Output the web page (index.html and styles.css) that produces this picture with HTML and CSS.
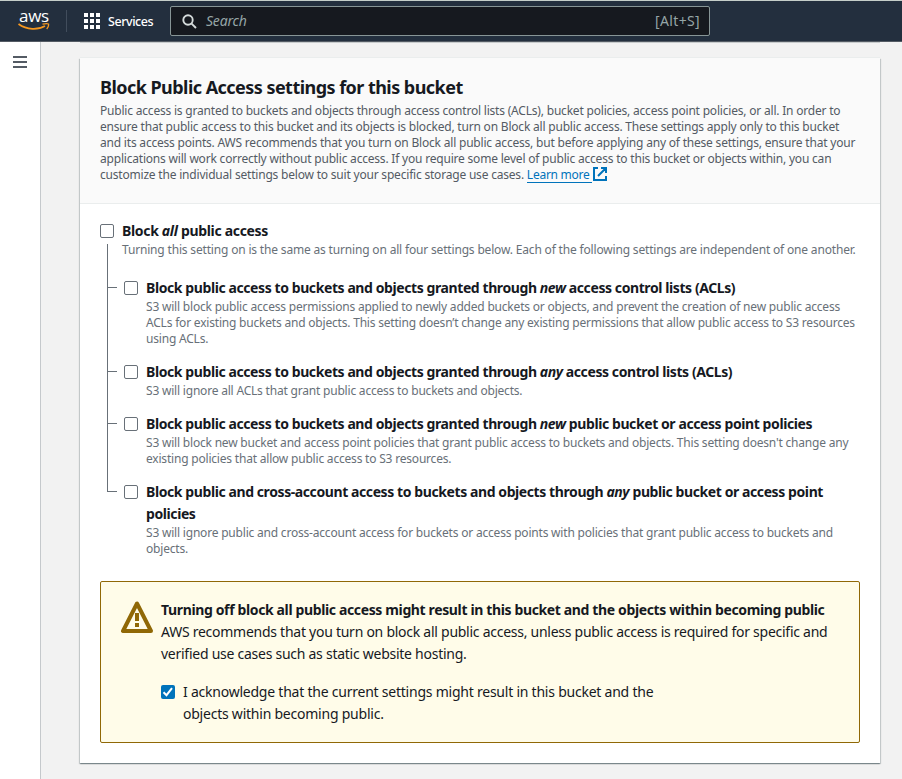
FILE: index.html
```html
<!DOCTYPE html>
<html lang="en">
<head>
<meta charset="utf-8">
<title>Block Public Access settings</title>
<link rel="stylesheet" href="styles.css">
</head>
<body>
<header class="topbar">
  <div class="logo"><span>aws</span>
    <svg width="32" height="8" viewBox="0 0 32 8"><path d="M.5 1C9 7.200 20 7.200 27 3" fill="none" stroke="#f7981f" stroke-width="1.700"/><path d="M24.500 1.200Q29 .2 30.500 1 31 3.500 28.700 6" fill="none" stroke="#f7981f" stroke-width="1.300"/></svg>
  </div>
  <div class="services">
    <svg width="16" height="16" viewBox="0 0 16 16" fill="#fff"><path d="M0 0h4v4H0zM6 0h4v4H6zM12 0h4v4h-4zM0 6h4v4H0zM6 6h4v4H6zM12 6h4v4h-4zM0 12h4v4H0zM6 12h4v4H6zM12 12h4v4h-4z"/></svg>
    <span>Services</span>
  </div>
  <div class="search">
    <svg width="15" height="15" viewBox="0 0 15 15" fill="none" stroke="#d5dbdb" stroke-width="1.900"><circle cx="6" cy="6" r="4.700"/><path d="M9.300 9.300 14 14"/></svg>
    <span class="hint">Search</span><span class="key">[Alt+S]</span>
  </div>
</header>
<div class="page">
  <nav class="side"><svg width="14" height="12" viewBox="0 0 14 12" fill="#545b64"><path d="M0 0h14v2H0zM0 5h14v2H0zM0 10h14v2H0z"/></svg></nav>
  <main>
    <div class="previous"></div>
    <section class="card">
      <div class="head">
        <h1>Block Public Access settings for this bucket</h1>
        <p class="small intro">
          <span>Public access is granted to buckets and objects through access control lists (ACLs), bucket policies, access point policies, or all. In order to</span>
          <span>ensure that public access to this bucket and its objects is blocked, turn on Block all public access. These settings apply only to this bucket</span>
          <span>and its access points. AWS recommends that you turn on Block all public access, but before applying any of these settings, ensure that your</span>
          <span>applications will work correctly without public access. If you require some level of public access to this bucket or objects within, you can</span>
          <span>customize the individual settings below to suit your specific storage use cases. <a>Learn more&nbsp;</a><svg class="ext" width="14" height="14" viewBox="0 0 14 14" fill="none" stroke="#0073bb" stroke-width="2"><path d="M5 1H1v12h12V9M8 1h5v5M13 1 5 9"/></svg></span>
        </p>
      </div>
      <div class="body">
        <div class="option">
          <i class="box"></i>
          <div><h2>Block <em>all</em> public access</h2>
          <p class="small all"><span>Turning this setting on is the same as turning on all four settings below. Each of the following settings are independent of one another.</span></p></div>
        </div>
        <div class="tree">
          <div class="option child">
            <i class="box"></i>
            <div><h2>Block public access to buckets and objects granted through <em>new</em> access control lists (ACLs)</h2>
            <p class="small"><span>S3 will block public access permissions applied to newly added buckets or objects, and prevent the creation of new public access</span><span>ACLs for existing buckets and objects. This setting doesn’t change any existing permissions that allow public access to S3 resources</span><span>using ACLs.</span></p></div>
          </div>
          <div class="option child">
            <i class="box"></i>
            <div><h2>Block public access to buckets and objects granted through <em>any</em> access control lists (ACLs)</h2>
            <p class="small"><span>S3 will ignore all ACLs that grant public access to buckets and objects.</span></p></div>
          </div>
          <div class="option child">
            <i class="box"></i>
            <div><h2>Block public access to buckets and objects granted through <em>new</em> public bucket or access point policies</h2>
            <p class="small"><span>S3 will block new bucket and access point policies that grant public access to buckets and objects. This setting doesn't change any</span><span>existing policies that allow public access to S3 resources.</span></p></div>
          </div>
          <div class="option child last">
            <i class="box"></i>
            <div><h2>Block public and cross-account access to buckets and objects through <em>any</em> public bucket or access point<br>policies</h2>
            <p class="small"><span>S3 will ignore public and cross-account access for buckets or access points with policies that grant public access to buckets and</span><span>objects.</span></p></div>
          </div>
        </div>
        <div class="alert">
          <svg width="32" height="32" viewBox="0 0 32 32"><path d="M16 2.500 2 30h28z" fill="none" stroke="#906806" stroke-width="4" stroke-linejoin="round"/><path d="M14 12h4v8h-4zM14 22h4v4h-4z" fill="#906806"/></svg>
          <div>
            <h2>Turning off block all public access might result in this bucket and the objects within becoming public</h2>
            <p>AWS recommends that you turn on block all public access, unless public access is required for specific and<br>verified use cases such as static website hosting.</p>
            <div class="option ack">
              <i class="box checked"><svg width="14" height="14" viewBox="0 0 14 14" fill="none" stroke="#fff" stroke-width="2"><path d="m2.500 7.200 3 3 5.500-7"/></svg></i>
              <p>I acknowledge that the current settings might result in this bucket and the<br>objects within becoming public.</p>
            </div>
          </div>
        </div>
      </div>
    </section>
  </main>
</div>
</body>
</html>
```
FILE: styles.css
```css
* { box-sizing: border-box; }
body { margin: 0; height: 779px; overflow: hidden; background: #f2f2f2; color: #16191f; font: 14px/22px "Noto Sans", sans-serif; display: flex; flex-direction: column; }
h1, h2, p { margin: 0; white-space: nowrap; }
svg { display: block; flex: none; }
.topbar { height: 42px; flex: none; background: #232f3e; border-top: 1px solid #c5cec9; border-bottom: 1px solid #545b64; display: flex; align-items: center; color: #fff; }
.logo { width: 67px; height: 22px; padding-left: 18px; border-right: 1px solid #414d5c; display: flex; flex-direction: column; }
.logo span { font: 500 17px/12px "Open Sans", sans-serif; letter-spacing: -.3px; padding-left: 1px; height: 13px; }
.services { display: flex; align-items: center; gap: 8px; width: 103px; padding-left: 17px; font-size: 12.500px; line-height: 20px; font-weight: 500; letter-spacing: -.45px; }
.services span { padding-top: 1px; }
.search { width: 540px; height: 30px; background: #16191f; border: 1px solid #879596; border-radius: 2px; display: flex; align-items: center; padding: 0 9px 0 11px; color: #95a5a6; }
.hint { font-style: italic; margin-left: 9px; flex: 1; letter-spacing: -.2px; }
.key { letter-spacing: .35px; }
.page { flex: 1; display: flex; }
.side { width: 41px; background: #fff; border-right: 1px solid #c5c9cc; padding: 14px 0 0 13px; }
main { padding-left: 39px; }
.previous { width: 800px; height: 1px; background: #c8cccd; margin-bottom: 15px; }
.card { width: 800px; height: 705px; background: #fff; box-shadow: 0 1px 1px 0 rgba(0,28,36,.3), 1px 1px 1px 0 rgba(0,28,36,.15), -1px 1px 1px 0 rgba(0,28,36,.15), 0 -1px 0 #eaeded; }
.head { height: 146px; background: #fafafa; border-bottom: 1px solid #eaeded; padding: 18px 20px 0; }
h1 { font-size: 18px; line-height: 22px; font-weight: 700; letter-spacing: -.54px; }
h2 { font-size: 14px; line-height: 22px; font-weight: 700; letter-spacing: -.32px; }
.child h2 { letter-spacing: -.41px; }
.small { font-size: 12px; line-height: 16px; color: #687078; letter-spacing: -.2px; }
.small span { display: block; }
.small.all { letter-spacing: -.173px; }
.intro { color: #545b64; padding-top: 5px; }
a { display: inline-block; height: 16px; line-height: 16px; vertical-align: top; color: #0073bb; border-bottom: 1px solid #0073bb; letter-spacing: -.25px; }
.ext { display: inline-block; vertical-align: -2px; margin-left: 1px; }
.body { padding: 16px 20px 0; }
.option { display: flex; gap: 8px; }
.box { flex: none; width: 14px; height: 14px; margin-top: 4px; border: 1px solid #687078; border-radius: 2px; background: #fff; }
.checked { border: 0; background: #0073bb; }
.tree { padding-left: 7px; margin-top: -15px; padding-top: 34px; position: relative; }
.tree::before { content: ""; position: absolute; left: 7px; top: 1px; height: 248px; border-left: 1px solid #687078; }
.child { margin-bottom: 14px; }
.child::before { content: ""; width: 9px; height: 1px; background: #687078; margin: 10px 0 0 1px; }
.child .box { margin-left: -1px; }
.alert { margin-top: 24px; height: 162px; background: #fffce9; border: 1px solid #906806; border-radius: 2px; padding: 17px 20px; display: flex; gap: 8px; }
.alert > svg { margin-top: 2px; }
.alert h2 { letter-spacing: -.365px; }
.alert p { letter-spacing: -.26px; }
.alert .ack p { letter-spacing: -.23px; }
.ack { margin-top: 16px; }
```
